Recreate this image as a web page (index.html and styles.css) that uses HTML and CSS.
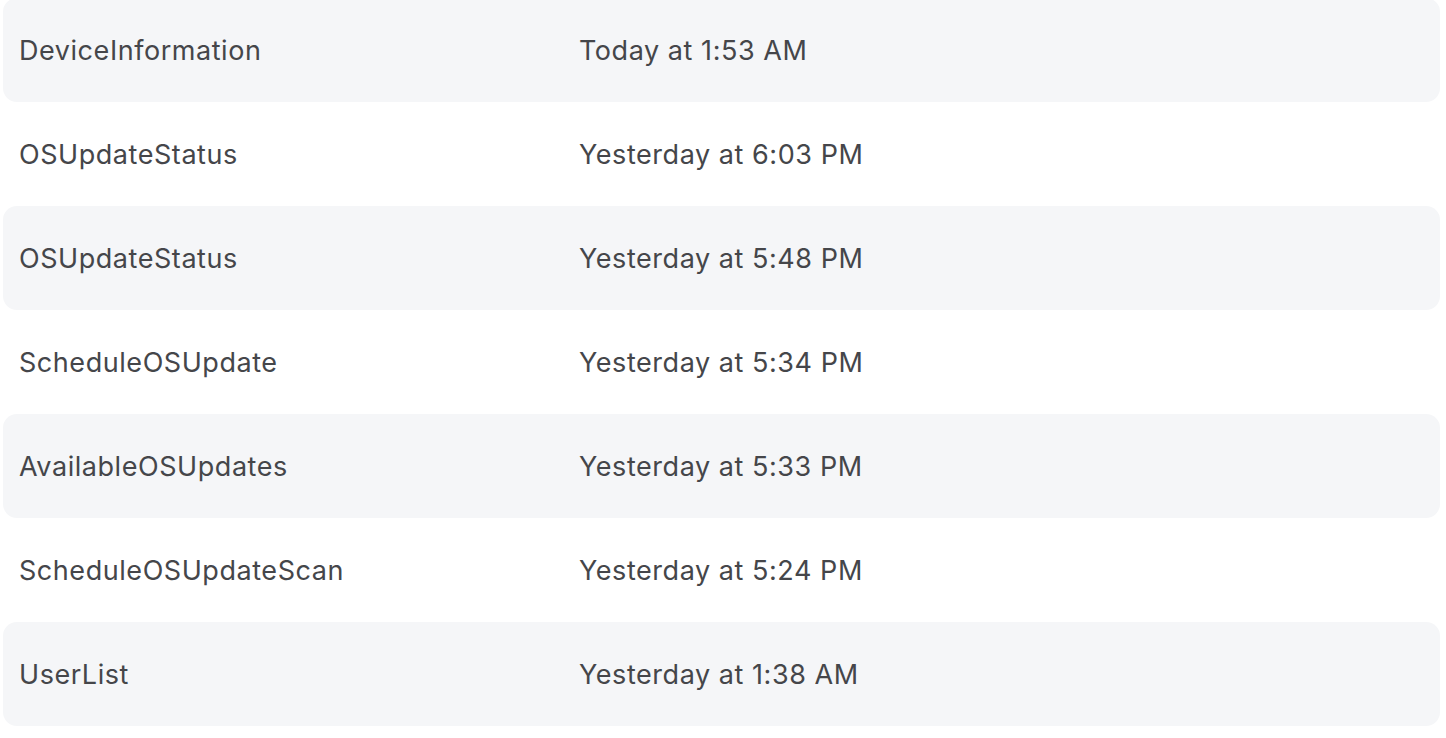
FILE: index.html
```html
<!DOCTYPE html>
<html>
<head>
<meta charset="utf-8">
<link rel="stylesheet" href="styles.css">
</head>
<body>
<div class="list">
  <div class="row alt"><div class="name">DeviceInformation</div><div class="time">Today at 1:53 AM</div></div>
  <div class="row"><div class="name">OSUpdateStatus</div><div class="time">Yesterday at 6:03 PM</div></div>
  <div class="row alt"><div class="name">OSUpdateStatus</div><div class="time">Yesterday at 5:48 PM</div></div>
  <div class="row"><div class="name">ScheduleOSUpdate</div><div class="time">Yesterday at 5:34 PM</div></div>
  <div class="row alt"><div class="name">AvailableOSUpdates</div><div class="time">Yesterday at 5:33 PM</div></div>
  <div class="row"><div class="name">ScheduleOSUpdateScan</div><div class="time">Yesterday at 5:24 PM</div></div>
  <div class="row alt"><div class="name">UserList</div><div class="time">Yesterday at 1:38 AM</div></div>
</div>
</body>
</html>
```
FILE: styles.css
```css
html, body {
  margin: 0;
  padding: 0;
  background: #ffffff;
}
body {
  font-family: Inter, "Noto Sans", sans-serif;
  color: #45464a;
  overflow: hidden;
}
.list {
  display: flex;
  flex-direction: column;
  margin: -2px 6px 0 3px;
}
.row {
  display: flex;
  align-items: center;
  height: 104px;
  border-radius: 14px;
  font-size: 27px;
  letter-spacing: 0.55px;
}
.row.alt {
  background: #f5f6f8;
}
.name {
  width: 560px;
  padding-left: 16px;
}
.time {
  flex: 1;
}
```
